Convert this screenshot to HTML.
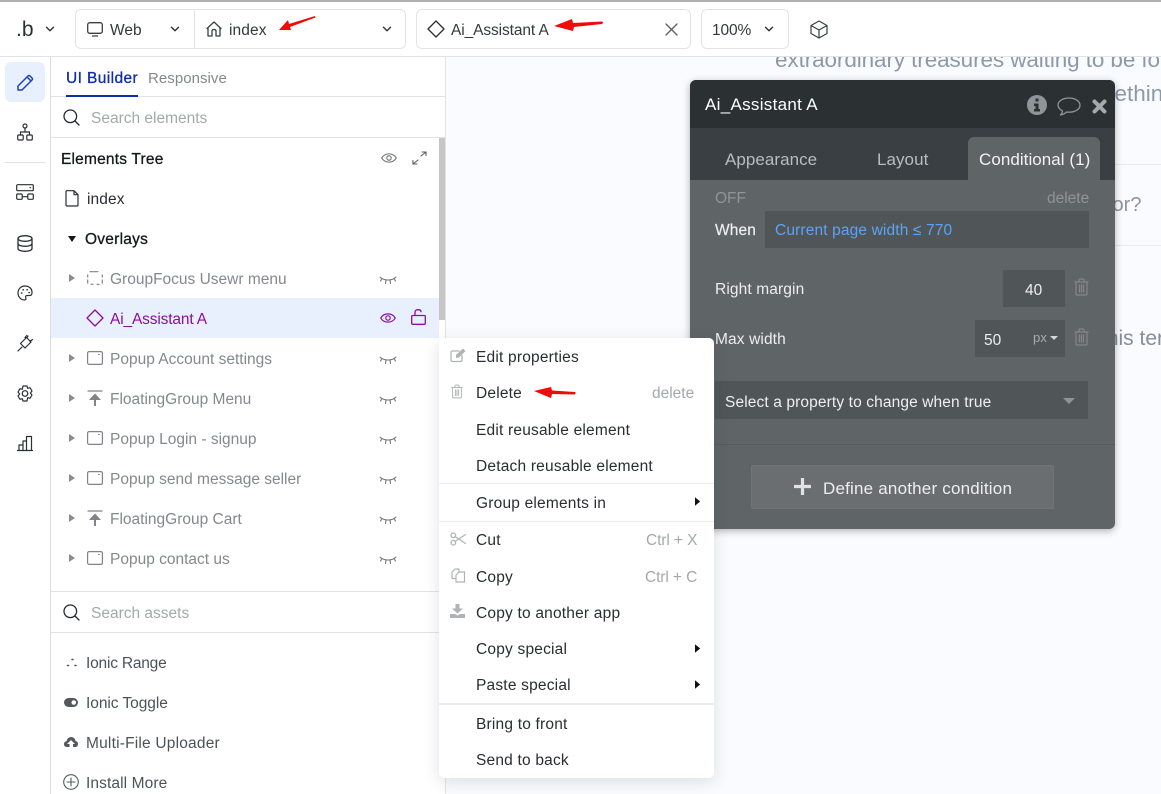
<!DOCTYPE html>
<html><head><meta charset="utf-8">
<style>
*{box-sizing:border-box}
html,body{margin:0;padding:0}
body{width:1161px;height:794px;position:relative;overflow:hidden;background:#fafbfe;font-family:"Liberation Sans",sans-serif;font-size:15.5px;color:#1f2328}
.a{position:absolute}
.t{position:absolute;white-space:nowrap;line-height:20px;height:20px;letter-spacing:.1px;margin-top:1px}
svg{position:absolute;overflow:visible;fill:none;stroke-linecap:round;stroke-linejoin:round}
.g{color:#85888c;letter-spacing:0}
.m{color:#2a2d31;letter-spacing:.2px}
.s{color:#a5a8ab;letter-spacing:0}
.w{color:#eceeef;letter-spacing:.12px;margin-top:2px}
.d{margin-top:2px}
.tab{font-size:17px;letter-spacing:.05px}
</style></head><body>
<svg width="0" height="0" style="position:absolute">
<defs>
<symbol id="eyec" viewBox="0 0 18 10"><path d="M1 2C5 6 13 6 17 2M3 3.500 1.500 6M7 5l-.5 3.500M11 5l.5 3.500M15 3.500 16.500 6" stroke="#777" stroke-width="1.100" fill="none"/></symbol>
<symbol id="pop" viewBox="0 0 16 14"><rect x=".6" y=".6" width="14.800" height="12.800" rx="1.500" stroke="#808488" stroke-width="1.200" fill="none"/><path d="M11.500 3.500h.8" stroke="#808488" stroke-width="1.100"/></symbol>
<symbol id="flo" viewBox="0 0 16 16"><path d="M1 1h14" stroke="#808488" stroke-width="1.300"/><path d="M8 3.500 14 10H10v0H9v6H7v-6H2z" fill="#808488"/></symbol>
<symbol id="tri" viewBox="0 0 6 8"><path d="M0 0l6 4-6 4z" fill="#8a8d90"/></symbol>
<symbol id="arr" viewBox="0 0 7 10"><path d="M0 0l6 5-6 5z" fill="#111"/></symbol>
<symbol id="chev" viewBox="0 0 10 6"><path d="M1.500 1.200 5 4.700l3.500-3.500" stroke="#30343a" stroke-width="1.400" fill="none"/></symbol>
<symbol id="srch" viewBox="0 0 17 17"><circle cx="7.300" cy="7.300" r="6.300" stroke="#23272b" stroke-width="1.300" fill="none"/><path d="M12 12l4 4" stroke="#23272b" stroke-width="1.300"/></symbol>
<symbol id="trash" viewBox="0 0 15 18"><path d="M1 4h13M5 4V2q0-1 1-1h3q1 0 1 1v2M2 4v12q0 1 1 1h9q1 0 1-1V4M5.500 7v7M7.500 7v7M9.500 7v7" stroke="currentColor" stroke-width="1.200" fill="none"/></symbol>
</defs></svg>

<div class="a" style="left:0;top:0;width:1161px;height:2px;background:#b1b1b3"></div>
<div class="a" style="left:0;top:2px;width:1161px;height:55px;background:#fff;border-bottom:1px solid #e3e3e5"></div>

<!-- top bar -->
<div class="t" style="left:16px;top:17px;font-size:21px;height:24px;line-height:24px;color:#2b2f33;letter-spacing:0">.b</div>
<svg style="left:45px;top:26px" width="10" height="6"><use href="#chev"/></svg>
<div class="a" style="left:75px;top:9px;width:331px;height:40px;border:1px solid #e4e4e6;border-radius:6px"></div>
<div class="a" style="left:194px;top:9px;width:1px;height:40px;background:#e4e4e6"></div>
<svg style="left:87px;top:22px" width="16" height="15" viewBox="0 0 16 15"><rect x=".7" y=".7" width="14.600" height="10.600" rx="2" stroke="#3a3e42" stroke-width="1.300"/><path d="M5.500 14h5" stroke="#3a3e42" stroke-width="1.300"/></svg>
<div class="t" style="left:110px;top:20px;color:#34383c;letter-spacing:0">Web</div>
<svg style="left:170px;top:26px" width="10" height="6"><use href="#chev"/></svg>
<svg style="left:206px;top:21px" width="16" height="16" viewBox="0 0 16 16"><path d="M1 7.500 8 1l7 6.500M2 6.500V15h4v-5q0-1.500 2-1.500t2 1.500v5h4V6.500" stroke="#3a3e42" stroke-width="1.300"/></svg>
<div class="t" style="left:229px;top:20px;color:#34383c">index</div>
<svg style="left:382px;top:26px" width="10" height="6"><use href="#chev"/></svg>
<svg style="left:279px;top:14px" width="37" height="17" viewBox="0 0 37 17"><path d="M0 16 9 6l1 4L36 2l.5 1.500L11 13l1 3z" fill="#f00a0a"/></svg>

<div class="a" style="left:416px;top:9px;width:275px;height:40px;border:1px solid #e4e4e6;border-radius:6px"></div>
<svg style="left:427px;top:20px" width="18" height="18" viewBox="0 0 18 18"><path d="M9 1l8 8-8 8-8-8z" stroke="#2b2f33" stroke-width="1.300"/></svg>
<div class="t" style="left:451px;top:20px;color:#34383c;letter-spacing:-.1px">Ai_Assistant A</div>
<svg style="left:554px;top:18px" width="50" height="13" viewBox="0 0 50 13"><path d="M0 8 18 1l1 4 29-1.500q2 1 0 2.500L20 9l-1 4z" fill="#f00a0a"/></svg>
<svg style="left:665px;top:23px" width="13" height="13" viewBox="0 0 13 13"><path d="M1 1l11 11M12 1 1 12" stroke="#5b5f63" stroke-width="1.300"/></svg>
<div class="a" style="left:701px;top:9px;width:88px;height:40px;border:1px solid #e4e4e6;border-radius:6px"></div>
<div class="t" style="left:712px;top:20px;color:#34383c;letter-spacing:-.1px">100%</div>
<svg style="left:764px;top:26px" width="10" height="6"><use href="#chev"/></svg>
<svg style="left:810px;top:20px" width="18" height="19" viewBox="0 0 18 19"><path d="M9 1l8 4.500v8L9 18l-8-4.500v-8zM1 5.500l8 4.500 8-4.500M9 10v8" stroke="#3a3e42" stroke-width="1.200"/></svg>

<!-- left rail -->
<div class="a" style="left:0;top:57px;width:51px;height:737px;background:#fff;border-right:1px solid #dcdcde"></div>
<div class="a" style="left:5px;top:62px;width:40px;height:40px;background:#e9f0fd;border-radius:6px"></div>
<svg style="left:17px;top:74px" width="17" height="17" viewBox="0 0 17 17"><path d="M1 16V12L11 2q1-1 2 0l2 2q1 1 0 2L5 16zM10 3l4 4" stroke="#1e3fc0" stroke-width="1.500"/></svg>
<svg style="left:17px;top:123px" width="16" height="18" viewBox="0 0 16 18"><circle cx="8" cy="3" r="2" stroke="#2b2f33" stroke-width="1.200"/><rect x=".7" y="12" width="5.500" height="5" rx="1" stroke="#2b2f33" stroke-width="1.200"/><rect x="9.800" y="12" width="5.500" height="5" rx="1" stroke="#2b2f33" stroke-width="1.200"/><path d="M8 5v4M3.500 12V9h9v3" stroke="#2b2f33" stroke-width="1.200"/></svg>
<div class="a" style="left:5px;top:162px;width:40px;height:1px;background:#e2e2e4"></div>
<svg style="left:16px;top:184px" width="18" height="16" viewBox="0 0 18 16"><rect x=".7" y=".7" width="16.600" height="6" rx="1" stroke="#2b2f33" stroke-width="1.200"/><rect x=".7" y="10" width="5.500" height="5.300" rx="1" stroke="#2b2f33" stroke-width="1.200"/><rect x="11.800" y="10" width="5.500" height="5.300" rx="1" stroke="#2b2f33" stroke-width="1.200"/><path d="M6.500 12.700h5M14 3.700h.6" stroke="#2b2f33" stroke-width="1.200"/></svg>
<svg style="left:17px;top:235px" width="16" height="17" viewBox="0 0 16 17"><ellipse cx="8" cy="3.500" rx="7" ry="2.800" stroke="#2b2f33" stroke-width="1.300"/><path d="M1 3.500v10c0 1.600 3 2.800 7 2.800s7-1.200 7-2.800v-10M1 8.500c0 1.600 3 2.800 7 2.800s7-1.200 7-2.800" stroke="#2b2f33" stroke-width="1.300"/></svg>
<svg style="left:17px;top:285px" width="16" height="16" viewBox="0 0 16 16"><path d="M8 1C4 1 1 4 1 8s3 7 6.500 7c2 0 1.500-2 1-3 0-1.500 1-1.500 2.500-1.500h2c1.500 0 2-1 2-3C15 3.500 12 1 8 1z" stroke="#2b2f33" stroke-width="1.200"/><path d="M4.500 8h.3M6 4.800h.3M10 4.800h.3M12 7.500h.3" stroke="#2b2f33" stroke-width="1.500"/></svg>
<svg style="left:17px;top:334px" width="17" height="18" viewBox="0 0 17 18"><path d="M1 17l4-4M3.500 9.500 9.500 3.500 14 8 8 14zM9.800 1.500 8 3.500M15.500 5.500 13 7.500M11 2l-1 2M15 6l-2 1" stroke="#2b2f33" stroke-width="1.200"/></svg>
<svg style="left:16px;top:385px" width="18" height="17" viewBox="0 0 18 17"><path d="M7 1h4l.7 2.300 2.300-.6 2 3.300-1.600 2 1.600 2-2 3.300-2.300-.6L11 16H7l-.7-2.300-2.300.6L2 11l1.600-2L2 7l2-3.300 2.300.6z" stroke="#2b2f33" stroke-width="1.200"/><circle cx="9" cy="8.500" r="2.800" stroke="#2b2f33" stroke-width="1.200"/></svg>
<svg style="left:17px;top:435px" width="16" height="16" viewBox="0 0 16 16"><path d="M.5 15.500h15M2 15V10h4v5M6 15V6h3.500v9M9.500 15V1.500H14.500V15" stroke="#2b2f33" stroke-width="1.200"/></svg>

<!-- left panel -->
<div class="a" style="left:51px;top:57px;width:395px;height:737px;background:#fff;border-right:1px solid #e3e3e5"></div>
<div class="t" style="left:66px;top:68px;color:#0f2cad;letter-spacing:.4px;-webkit-text-stroke:.3px #0f2cad">UI Builder</div>
<div class="t g" style="left:148px;top:68px;font-size:15px;letter-spacing:.05px">Responsive</div>
<div class="a" style="left:51px;top:96px;width:394px;height:1px;background:#e3e3e5"></div>
<div class="a" style="left:66px;top:95px;width:72px;height:2px;background:#0f2cad"></div>
<svg style="left:63px;top:109px" width="17" height="17"><use href="#srch"/></svg>
<div class="t s" style="left:91px;top:108px">Search elements</div>
<div class="a" style="left:51px;top:137px;width:394px;height:1px;background:#e3e3e5"></div>
<div class="a" style="left:439px;top:138px;width:6px;height:182px;background:#c6c6c6"></div>

<div class="t" style="left:61px;top:149px;color:#15181b;letter-spacing:.2px;-webkit-text-stroke:.3px #15181b">Elements Tree</div>
<svg style="left:381px;top:152px" width="16" height="12" viewBox="0 0 16 12"><path d="M.7 6C4 .5 12 .5 15.300 6 12 11.500 4 11.500.7 6z" stroke="#6e7276" stroke-width="1.100"/><circle cx="8" cy="6" r="2.200" stroke="#6e7276" stroke-width="1.100"/></svg>
<svg style="left:412px;top:151px" width="15" height="14" viewBox="0 0 15 14"><path d="M9 5l5-4M10 1h4v3.500M6 9l-5 4M1 9.500V13h4" stroke="#5a5e62" stroke-width="1.100"/></svg>

<svg style="left:65px;top:190px" width="14" height="17" viewBox="0 0 14 17"><path d="M1.500.7H9l4 4V15q0 1-1 1H2q-1 0-1-1V1.500zM9 .7v4h4" stroke="#2b2f33" stroke-width="1.200"/></svg>
<div class="t m" style="left:87px;top:189px;letter-spacing:.1px">index</div>
<svg style="left:68px;top:236px" width="8" height="6" viewBox="0 0 8 6"><path d="M0 0h8L4 6z" fill="#15181b"/></svg>
<div class="t" style="left:85px;top:229px;color:#15181b;letter-spacing:.25px;-webkit-text-stroke:.3px #15181b">Overlays</div>

<!-- rows -->
<svg style="left:69px;top:274px" width="6" height="8"><use href="#tri"/></svg>
<svg style="left:87px;top:271px" width="16" height="14" viewBox="0 0 16 14"><path d="M3 .7h10M.7 4v2M15.300 4v2M.7 9v3M15.300 9v3M4 13.300h2M10 13.300h2M7 .7h2" stroke="#808488" stroke-width="1.200" stroke-dasharray="3 2"/></svg>
<div class="t g" style="left:110px;top:269px">GroupFocus Usewr menu</div>
<svg style="left:379px;top:275px" width="18" height="10"><use href="#eyec"/></svg>

<div class="a" style="left:51px;top:298px;width:388px;height:40px;background:#e9f0fd"></div>
<svg style="left:86px;top:309px" width="18" height="18" viewBox="0 0 18 18"><path d="M9 1l8 8-8 8-8-8z" stroke="#8a0f9f" stroke-width="1.300"/></svg>
<div class="t" style="left:110px;top:309px;color:#8a0f9f;letter-spacing:-.15px">Ai_Assistant A</div>
<svg style="left:380px;top:312px" width="16" height="12" viewBox="0 0 16 12"><path d="M.7 6C4 .5 12 .5 15.300 6 12 11.500 4 11.500.7 6z" stroke="#8a0f9f" stroke-width="1.200"/><circle cx="8" cy="6" r="2.200" stroke="#8a0f9f" stroke-width="1.200"/></svg>
<svg style="left:411px;top:309px" width="15" height="16" viewBox="0 0 15 16"><rect x=".7" y="6.500" width="13.600" height="8.800" rx="1" stroke="#8a0f9f" stroke-width="1.300"/><path d="M4 6.500V3.500q0-2.800 3-2.800t3 2" stroke="#8a0f9f" stroke-width="1.300"/></svg>

<svg style="left:69px;top:354px" width="6" height="8"><use href="#tri"/></svg>
<svg style="left:87px;top:351px" width="16" height="14"><use href="#pop"/></svg>
<div class="t g" style="left:110px;top:349px">Popup Account settings</div>
<svg style="left:379px;top:355px" width="18" height="10"><use href="#eyec"/></svg>

<svg style="left:69px;top:394px" width="6" height="8"><use href="#tri"/></svg>
<svg style="left:87px;top:390px" width="16" height="16"><use href="#flo"/></svg>
<div class="t g" style="left:110px;top:389px">FloatingGroup Menu</div>
<svg style="left:379px;top:395px" width="18" height="10"><use href="#eyec"/></svg>

<svg style="left:69px;top:434px" width="6" height="8"><use href="#tri"/></svg>
<svg style="left:87px;top:431px" width="16" height="14"><use href="#pop"/></svg>
<div class="t g" style="left:110px;top:429px">Popup Login - signup</div>
<svg style="left:379px;top:435px" width="18" height="10"><use href="#eyec"/></svg>

<svg style="left:69px;top:474px" width="6" height="8"><use href="#tri"/></svg>
<svg style="left:87px;top:471px" width="16" height="14"><use href="#pop"/></svg>
<div class="t g" style="left:110px;top:469px">Popup send message seller</div>
<svg style="left:379px;top:475px" width="18" height="10"><use href="#eyec"/></svg>

<svg style="left:69px;top:514px" width="6" height="8"><use href="#tri"/></svg>
<svg style="left:87px;top:510px" width="16" height="16"><use href="#flo"/></svg>
<div class="t g" style="left:110px;top:509px">FloatingGroup Cart</div>
<svg style="left:379px;top:515px" width="18" height="10"><use href="#eyec"/></svg>

<svg style="left:69px;top:554px" width="6" height="8"><use href="#tri"/></svg>
<svg style="left:87px;top:551px" width="16" height="14"><use href="#pop"/></svg>
<div class="t g" style="left:110px;top:549px">Popup contact us</div>
<svg style="left:379px;top:555px" width="18" height="10"><use href="#eyec"/></svg>

<div class="a" style="left:51px;top:591px;width:394px;height:1px;background:#e3e3e5"></div>
<svg style="left:63px;top:604px" width="17" height="17"><use href="#srch"/></svg>
<div class="t s" style="left:91px;top:603px">Search assets</div>
<div class="a" style="left:51px;top:632px;width:394px;height:1px;background:#e3e3e5"></div>

<svg style="left:65px;top:658px" width="13" height="9" viewBox="0 0 13 9"><path d="M7 1.500h1M2.500 7.500h1M10 7.500h1" stroke="#4c5055" stroke-width="1.500"/></svg>
<div class="t" style="left:86px;top:653px;color:#4c5358;letter-spacing:-.2px">Ionic Range</div>
<svg style="left:64px;top:698px" width="14" height="9" viewBox="0 0 14 9"><rect width="14" height="9" rx="4.500" fill="#55595d"/><circle cx="9.800" cy="4.500" r="2.300" fill="#fff"/></svg>
<div class="t" style="left:86px;top:693px;color:#4c5358;letter-spacing:-.05px">Ionic Toggle</div>
<svg style="left:64px;top:737px" width="14" height="10" viewBox="0 0 14 10"><path d="M3 10Q0 10 0 7q0-2.500 2.500-2.800Q3.500 0 7.500 0 11 .5 11.500 4 14 4.500 14 7q0 3-3 3h-2V7h2L7 3 3 7h2.500v3z" fill="#55595d"/></svg>
<div class="t" style="left:86px;top:733px;color:#4c5358;letter-spacing:.2px">Multi-File Uploader</div>
<svg style="left:63px;top:774px" width="16" height="16" viewBox="0 0 16 16"><circle cx="8" cy="8" r="7.300" stroke="#55595d" stroke-width="1.100"/><path d="M8 4v8M4 8h8" stroke="#55595d" stroke-width="1.100"/></svg>
<div class="t" style="left:86px;top:773px;color:#4c5358">Install More</div>

<!-- canvas -->
<div class="a" style="left:446px;top:57px;width:715px;height:737px;overflow:hidden">
 <div class="t" style="left:329px;top:-14px;height:32px;line-height:32px;font-size:22.500px;color:#8e99a8;letter-spacing:-.1px">extraordinary treasures waiting to be found</div>
 <div class="t" style="left:626px;top:20px;height:32px;line-height:32px;font-size:22.500px;color:#8e99a8;letter-spacing:0">something</div>
 <div class="a" style="left:669px;top:107px;width:60px;height:1px;background:#e9eaec"></div>
 <div class="t" style="left:661px;top:131px;height:32px;line-height:32px;font-size:20px;color:#8e95a0;letter-spacing:0">for?</div>
 <div class="a" style="left:669px;top:188px;width:60px;height:1px;background:#e9eaec"></div>
 <div class="t" style="left:655px;top:265px;height:32px;line-height:32px;font-size:21px;color:#858d98;letter-spacing:0">this term</div>
</div>

<!-- dark panel -->
<div class="a" style="left:690px;top:80px;width:425px;height:449px;background:#5f6467;border-radius:6px;box-shadow:0 2px 8px rgba(0,0,0,.3);overflow:hidden">
 <div class="a" style="left:0;top:0;width:425px;height:48px;background:#2b3133"></div>
 <div class="a" style="left:0;top:48px;width:425px;height:52px;background:#393f43"></div>
 <div class="a" style="left:278px;top:57px;width:132px;height:43px;background:#5f6467;border-radius:6px 6px 0 0"></div>
 <div class="a" style="left:0;top:364px;width:425px;height:1px;background:#575b5e"></div>
</div>
<div class="t" style="left:705px;top:93px;font-size:17px;color:#fff;height:22px;line-height:22px;letter-spacing:.3px">Ai_Assistant A</div>
<svg style="left:1027px;top:95px" width="20" height="20" viewBox="0 0 20 20"><circle cx="10" cy="10" r="10" fill="#8f9598"/><path d="M8.500 3.500h3v3h-3zM7 8.500h4.500V14H13v2.500H7V14h1.500v-3H7z" fill="#2b3133"/></svg>
<svg style="left:1057px;top:97px" width="24" height="20" viewBox="0 0 24 20"><path d="M12 1C6 1 1 4 1 8c0 2.500 2 4.500 4.500 6-.2 1.500-1 3-2 4 2.500-.5 4.500-1.500 6-3 1 .2 1.500.2 2.500.2 6 0 11-3 11-7S18 1 12 1z" stroke="#8f9598" stroke-width="1.300"/></svg>
<svg style="left:1092px;top:99px" width="15" height="15" viewBox="0 0 15 15"><path d="M2.500 2.500l10 10M12.500 2.500l-10 10" stroke="#a4a9ab" stroke-width="4" stroke-linecap="round"/></svg>
<div class="t d tab" style="left:725px;top:148px;color:#b8bcbe">Appearance</div>
<div class="t d tab" style="left:877px;top:148px;color:#b8bcbe">Layout</div>
<div class="t d tab" style="left:979px;top:148px;color:#f1f2f3">Conditional (1)</div>
<div class="t d" style="left:715px;top:187px;color:#909497;letter-spacing:0">OFF</div>
<div class="t d" style="left:1047px;top:187px;color:#909497;letter-spacing:0">delete</div>
<div class="t w" style="left:715px;top:219px;-webkit-text-stroke:.2px #eceeef">When</div>
<div class="a" style="left:765px;top:211px;width:324px;height:37px;background:#505558"></div>
<div class="t d" style="left:775px;top:219px;color:#5ba4f5;letter-spacing:.14px">Current page width ≤ 770</div>
<div class="t w" style="left:715px;top:278px">Right margin</div>
<div class="a" style="left:1003px;top:270px;width:62px;height:37px;background:#505558"></div>
<div class="t w" style="left:1025px;top:279px;letter-spacing:0">40</div>
<svg style="left:1074px;top:278px;color:#83878a" width="15" height="18"><use href="#trash"/></svg>
<div class="t w" style="left:715px;top:328px">Max width</div>
<div class="a" style="left:975px;top:320px;width:90px;height:37px;background:#505558"></div>
<div class="t w" style="left:984px;top:329px;letter-spacing:0">50</div>
<div class="t" style="left:1033px;top:327px;color:#a9adaf;font-size:13px">px</div>
<svg style="left:1050px;top:336px" width="8" height="4" viewBox="0 0 8 4"><path d="M0 0h8L4 4z" fill="#d4d6d8"/></svg>
<svg style="left:1074px;top:328px;color:#83878a" width="15" height="18"><use href="#trash"/></svg>
<div class="a" style="left:715px;top:381px;width:373px;height:38px;background:#505558"></div>
<div class="t w" style="left:725px;top:391px">Select a property to change when true</div>
<svg style="left:1063px;top:398px" width="12" height="6" viewBox="0 0 12 6"><path d="M0 0h12L6 6z" fill="#909497"/></svg>
<div class="a" style="left:751px;top:465px;width:303px;height:44px;background:#6a6e71;border:1px solid #707477;border-radius:2px"></div>
<svg style="left:794px;top:478px" width="17" height="17" viewBox="0 0 17 17"><path d="M8.500 0v17M0 8.500h17" stroke="#e0e2e3" stroke-width="3.200" stroke-linecap="butt"/></svg>
<div class="t" style="left:823px;top:478px;font-size:17px;letter-spacing:.2px;color:#eceeef">Define another condition</div>

<!-- context menu -->
<div class="a" style="left:439px;top:338px;width:275px;height:440px;background:#fff;border-radius:5px;box-shadow:0 4px 16px rgba(40,50,80,.14)"></div>
<div class="a" style="left:439px;top:483px;width:275px;height:1px;background:#ececee"></div>
<div class="a" style="left:439px;top:521px;width:275px;height:1px;background:#ececee"></div>
<div class="a" style="left:439px;top:703px;width:275px;height:2px;background:#ececee"></div>

<svg style="left:450px;top:348px" width="16" height="15" viewBox="0 0 16 15"><path d="M12 7.500V12q0 1.500-1.500 1.500H2.500Q1 13.500 1 12V4.500Q1 3 2.500 3H9" stroke="#b0b3b5" stroke-width="1.300"/><path d="M6 7l7-6.500 2.500 2.500L9 9.500 6 10z" fill="#b0b3b5"/></svg>
<div class="t m" style="left:476px;top:347px">Edit properties</div>
<svg style="left:451px;top:384px;color:#b0b3b5" width="12" height="15"><use href="#trash"/></svg>
<div class="t m" style="left:476px;top:383px">Delete</div>
<svg style="left:534px;top:387px" width="42" height="12" viewBox="0 0 42 12"><path d="M0 4 17 0l1 3.500 23 1.500q1.500 1-.5 2.500L18 7l-1 4z" fill="#f00a0a"/></svg>
<div class="t s" style="left:652px;top:383px">delete</div>
<div class="t m" style="left:476px;top:420px">Edit reusable element</div>
<div class="t m" style="left:476px;top:456px">Detach reusable element</div>
<div class="t m" style="left:476px;top:493px">Group elements in</div>
<svg style="left:695px;top:497px" width="6" height="9"><use href="#arr"/></svg>
<svg style="left:450px;top:532px" width="16" height="14" viewBox="0 0 16 14"><circle cx="3.300" cy="3.300" r="2.300" stroke="#b0b3b5" stroke-width="1.300"/><circle cx="3.300" cy="10.700" r="2.300" stroke="#b0b3b5" stroke-width="1.300"/><path d="M5 4.500 15.500 11.500M5 9.500 15.500 2.500" stroke="#b0b3b5" stroke-width="1.300"/></svg>
<div class="t m" style="left:476px;top:530px">Cut</div>
<div class="t s" style="left:646px;top:530px;letter-spacing:-.1px">Ctrl + X</div>
<svg style="left:451px;top:568px" width="15" height="15" viewBox="0 0 15 15"><path d="M5 10.500H1V4l3-3h4v3M8 4H13.500V14H5V7z" stroke="#b0b3b5" stroke-width="1.200"/></svg>
<div class="t m" style="left:476px;top:567px">Copy</div>
<div class="t s" style="left:645px;top:567px;letter-spacing:-.1px">Ctrl + C</div>
<svg style="left:450px;top:604px" width="15" height="14" viewBox="0 0 15 14"><path d="M5.500 0h4v4.500H13L7.500 9.500 2 4.500h3.500z" fill="#b0b3b5"/><path d="M0 10h5l2.500 1.500L10 10h5v4H0z" fill="#b0b3b5"/></svg>
<div class="t m" style="left:476px;top:603px">Copy to another app</div>
<div class="t m" style="left:476px;top:639px">Copy special</div>
<svg style="left:695px;top:644px" width="6" height="9"><use href="#arr"/></svg>
<div class="t m" style="left:476px;top:675px">Paste special</div>
<svg style="left:695px;top:680px" width="6" height="9"><use href="#arr"/></svg>
<div class="t m" style="left:476px;top:714px">Bring to front</div>
<div class="t m" style="left:476px;top:750px">Send to back</div>
</body></html>
